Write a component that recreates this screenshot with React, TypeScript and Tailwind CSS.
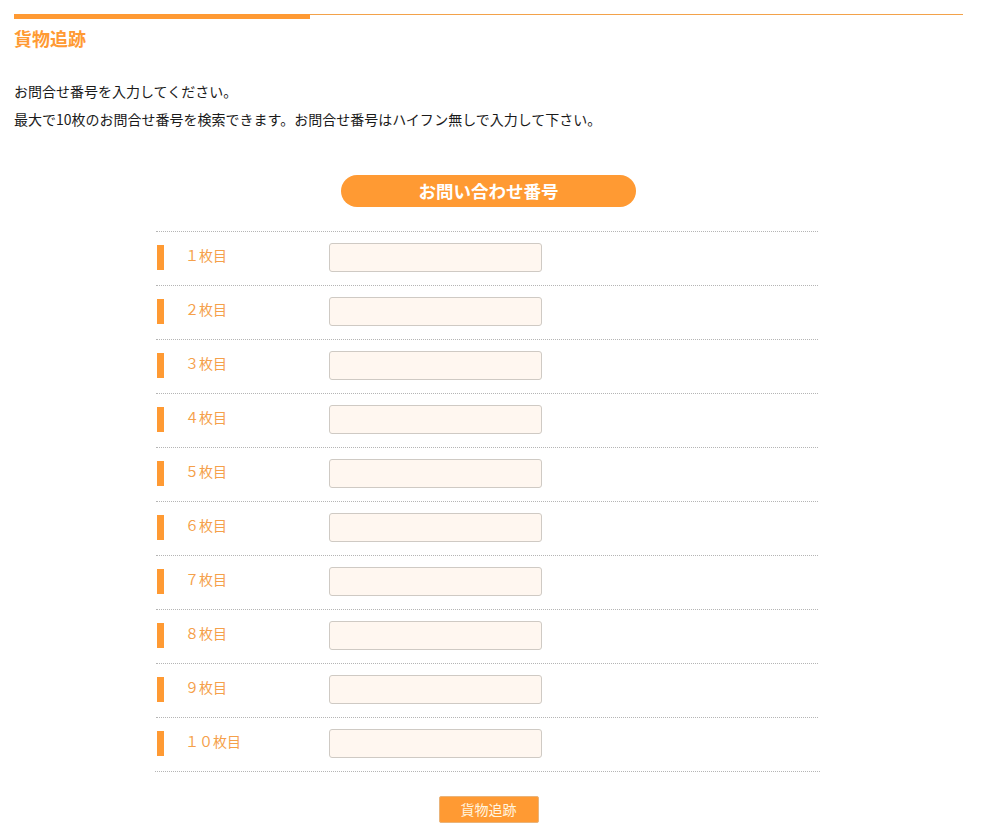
import React from "react";

const rows = ["１", "２", "３", "４", "５", "６", "７", "８", "９", "１０"];

export default function App() {
  return (
    <div
      className="min-h-[835px] bg-white pl-[14px] pr-[22px] pt-[14px] text-[#1a1a1a]"
      style={{ fontFamily: '"Noto Sans CJK JP", "Noto Sans", sans-serif' }}
    >
      <div className="flex items-start">
        <div className="h-[5px] w-[296px] bg-[#ff9a33]" />
        <div className="h-px flex-1 bg-[#f3a24a]" />
      </div>
      <h1 className="mt-[7px] text-[18px] font-bold leading-[24px] text-[#ff9a33]">貨物追跡</h1>
      <div className="mt-[27px] text-[14px] leading-[28px]">
        <p>お問合せ番号を入力してください。</p>
        <p>最大で10枚のお問合せ番号を検索できます。お問合せ番号はハイフン無しで入力して下さい。</p>
      </div>
      <div className="mx-auto mt-[42px] flex h-[32px] w-[295px] items-center justify-center rounded-full bg-[#ff9a33] text-[17.5px] font-bold text-white">
        お問い合わせ番号
      </div>
      <div className="ml-[142px] mt-[24px] w-[662px]">
        {rows.map((n) => (
          <div key={n} className="flex h-[54px] items-center border-t border-dotted border-[#b5b5b5]">
            <div className="mb-[2px] ml-px h-[25px] w-[7px] bg-[#ff9a33]" />
            <div className="mb-[6px] ml-[21px] w-[144px] text-[14px] text-[#f5a04a]">{n}枚目</div>
            <input
              type="text"
              className="mb-[2px] h-[29px] w-[213px] rounded-[3px] border border-[#cfcac4] bg-[#fff7f0] px-2 text-[14px] outline-none"
            />
          </div>
        ))}
        <div className="-ml-px w-[665px] border-t border-dotted border-[#b5b5b5]" />
      </div>
      <div className="mt-[24px] flex justify-center">
        <button className="h-[27px] w-[100px] rounded-[2px] border border-[#eab47a] bg-[#ff9a33] text-[14px] text-[#fff6e0]">
          貨物追跡
        </button>
      </div>
    </div>
  );
}
